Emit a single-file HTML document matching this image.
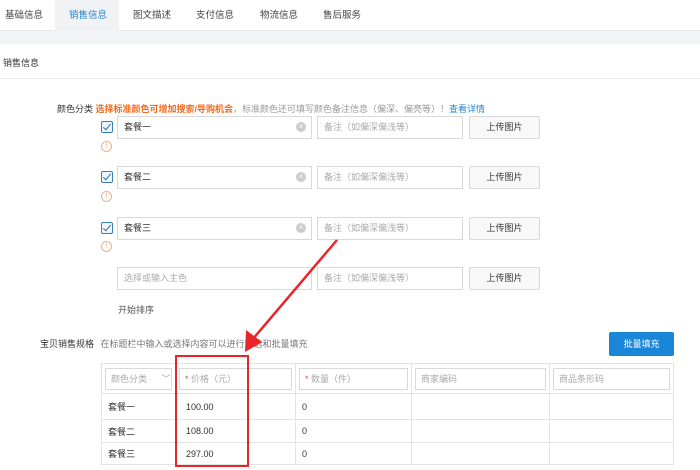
<!DOCTYPE html><html><head><meta charset="utf-8"><style>
*{margin:0;padding:0;box-sizing:border-box}
body{width:700px;height:470px;background:#fff;font-family:"Liberation Sans","Noto Sans CJK SC",sans-serif;font-size:9px;color:#333;position:relative;overflow:hidden}
.a{position:absolute}
.tab{position:absolute;top:0;height:31px;line-height:31px;font-size:9.5px;color:#444}
.inp{position:absolute;height:23px;border:1px solid #d9d9d9;background:#fff;line-height:21px;padding-left:6px;font-size:9px}
.ph{color:#aaa}
.btn{position:absolute;height:23px;border:1px solid #d9d9d9;background:#f8f8f8;line-height:21px;text-align:center;border-radius:2px}
.cb{position:absolute;width:12px;height:12px;border:1px solid #3a7fb8;border-radius:2px;background:#eef5fb}
.cb:after{content:"";position:absolute;left:3px;top:0px;width:3px;height:7px;border:solid #2a70b0;border-width:0 1.5px 1.5px 0;transform:rotate(40deg)}
.ex{position:absolute;width:11px;height:11px;border:1px solid #f0b080;border-radius:50%;color:#f0a070;font-size:7px;line-height:9px;text-align:center}
.clr{position:absolute;width:10px;height:10px;border-radius:50%;background:#ccc;color:#fff;font-size:8px;line-height:10px;text-align:center}
table{position:absolute;left:101px;top:363px;border-collapse:collapse}
td{border:1px solid #e3e3e3;font-size:9px;padding-left:6px}
.hi{border:1px solid #d9d9d9;height:22px;line-height:20px;padding-left:5px;color:#aaa}
</style></head><body>
<div class="a" style="left:0;top:0;width:700px;height:31px;border-bottom:1px solid #e8e8e8"></div>
<div class="a" style="left:55px;top:0;width:64px;height:31px;background:#f0f2f5"></div>
<div class="tab" style="left:5px">基础信息</div>
<div class="tab" style="left:69px;color:#2a86d0">销售信息</div>
<div class="tab" style="left:133px">图文描述</div>
<div class="tab" style="left:196px">支付信息</div>
<div class="tab" style="left:260px">物流信息</div>
<div class="tab" style="left:323px">售后服务</div>
<div class="a" style="left:0;top:31px;width:700px;height:13px;background:#f3f4f6"></div>
<div class="a" style="left:3px;top:56px">销售信息</div>
<div class="a" style="left:0;top:78px;width:700px;height:1px;background:#eee"></div>
<div class="a" style="left:57px;top:102px">颜色分类 <span style="color:#f06a1e;font-weight:bold">选择标准颜色可增加搜索/导购机会</span><span style="color:#999">，标准颜色还可填写颜色备注信息（偏深、偏亮等）！</span><span style="color:#2a86d0">查看详情</span></div>

<div class="cb" style="left:101px;top:121px"></div>
<div class="inp" style="left:117px;top:116px;width:195px">套餐一</div><div class="clr" style="left:296px;top:122px">×</div>
<div class="inp ph" style="left:317px;top:116px;width:146px">备注（如偏深偏浅等）</div>
<div class="btn" style="left:469px;top:116px;width:71px">上传图片</div>
<div class="ex" style="left:101px;top:141px">!</div>

<div class="cb" style="left:101px;top:171px"></div>
<div class="inp" style="left:117px;top:166px;width:195px">套餐二</div><div class="clr" style="left:296px;top:172px">×</div>
<div class="inp ph" style="left:317px;top:166px;width:146px">备注（如偏深偏浅等）</div>
<div class="btn" style="left:469px;top:166px;width:71px">上传图片</div>
<div class="ex" style="left:101px;top:191px">!</div>

<div class="cb" style="left:101px;top:222px"></div>
<div class="inp" style="left:117px;top:217px;width:195px">套餐三</div><div class="clr" style="left:296px;top:223px">×</div>
<div class="inp ph" style="left:317px;top:217px;width:146px">备注（如偏深偏浅等）</div>
<div class="btn" style="left:469px;top:217px;width:71px">上传图片</div>
<div class="ex" style="left:101px;top:241px">!</div>

<div class="inp ph" style="left:117px;top:267px;width:195px">选择或输入主色</div>
<div class="inp ph" style="left:317px;top:267px;width:146px">备注（如偏深偏浅等）</div>
<div class="btn" style="left:469px;top:267px;width:71px">上传图片</div>
<div class="a" style="left:118px;top:303px;color:#555">开始排序</div>

<div class="a" style="left:40px;top:337px">宝贝销售规格 <span style="color:#777;margin-left:4px">在标题栏中输入或选择内容可以进行筛选和批量填充</span></div>
<div class="a" style="left:609px;top:332px;width:65px;height:24px;background:#1a86d8;color:#fff;text-align:center;line-height:24px;border-radius:2px">批量填充</div>

<table>
<tr style="height:30px"><td style="width:74px;padding:3px"><div class="hi">颜色分类 <span style="margin-left:12px">﹀</span></div></td><td style="width:120px;padding:3px"><div class="hi"><span style="color:#e44">*</span> 价格（元）</div></td><td style="width:116px;padding:3px"><div class="hi"><span style="color:#e44">*</span> 数量（件）</div></td><td style="width:138px;padding:3px"><div class="hi">商家编码</div></td><td style="width:124px;padding:3px"><div class="hi">商品条形码</div></td></tr>
<tr style="height:26px"><td>套餐一</td><td style="padding-left:10px">100.00</td><td>0</td><td></td><td></td></tr>
<tr style="height:23px"><td>套餐二</td><td style="padding-left:10px">108.00</td><td>0</td><td></td><td></td></tr>
<tr style="height:22px"><td>套餐三</td><td style="padding-left:10px">297.00</td><td>0</td><td></td><td></td></tr>
</table>
<div class="a" style="left:175px;top:355px;width:74px;height:112px;border:2px solid #e8262a"></div>
<svg class="a" style="left:0;top:0" width="700" height="470"><line x1="337" y1="240" x2="252" y2="340" stroke="#e8262a" stroke-width="2.5"/><polygon points="245,352 246,330 262,342" fill="#e8262a"/></svg>
</body></html>
